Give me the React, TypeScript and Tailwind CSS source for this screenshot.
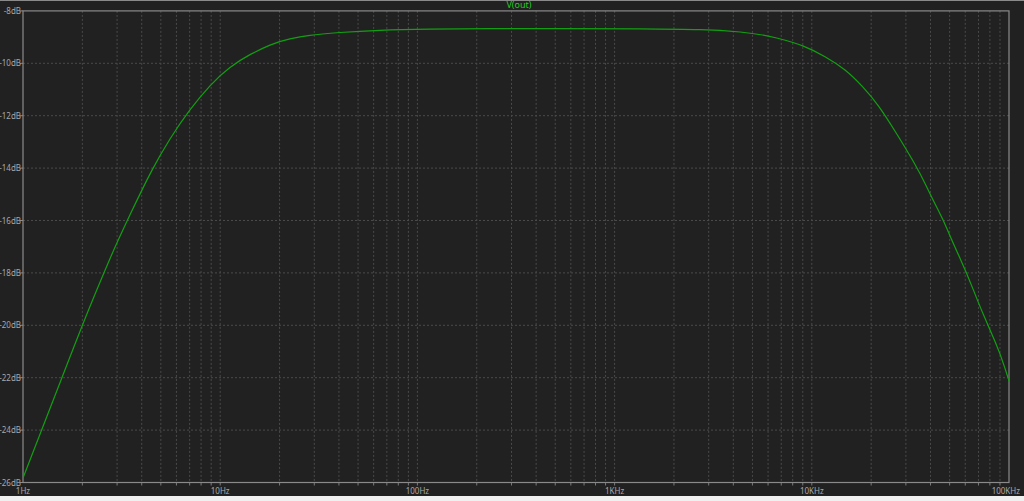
const X0 = 23;
const DEC = 197.2;
const yOf = (db: number) => 10.9 + (-8 - db) * 26.2;

const curve: [number, number][] = [
  [23, 478], [41.7, 430], [82.3, 325], [101.7, 278], [116.7, 243], [143.3, 186.7],
  [160, 155], [180, 123], [200, 96.7], [220, 75], [240, 60], [260, 49.3], [280, 41],
  [300, 36.7], [320, 34], [360, 31], [400, 29.6], [460, 28.8], [520, 28.6], [600, 28.7],
  [680, 29.2], [720, 30.2], [760, 33.8], [793.3, 42.2], [813.3, 50], [836.7, 63.3],
  [853.3, 76.7], [871.7, 96.7], [885, 115], [906.7, 150], [920, 173], [933, 200],
  [943.3, 220], [951.7, 240], [966.7, 273], [980, 306.7], [990, 330], [1000, 353], [1009, 380.7],
];

// smooth path through the sampled points (midpoint quadratic)
function smoothPath(pts: [number, number][]) {
  let d = `M${pts[0][0]},${pts[0][1]}`;
  for (let i = 1; i < pts.length - 1; i++) {
    const mx = (pts[i][0] + pts[i + 1][0]) / 2;
    const my = (pts[i][1] + pts[i + 1][1]) / 2;
    d += ` Q${pts[i][0]},${pts[i][1]} ${mx},${my}`;
  }
  const last = pts[pts.length - 1];
  return d + ` L${last[0]},${last[1]}`;
}

const decLabels = ['1Hz', '10Hz', '100Hz', '1KHz', '10KHz', '100KHz'];

export default function App() {
  const vlines: number[] = [];
  for (let d = 0; d < 5; d++) {
    for (let m = 2; m <= 9; m++) vlines.push(X0 + (d + Math.log10(m)) * DEC);
    if (d > 0) vlines.push(X0 + d * DEC);
  }
  const dbs = [-8, -10, -12, -14, -16, -18, -20, -22, -24, -26];
  return (
    <div className="w-[1024px] h-[501px] bg-[#212121] flex flex-col overflow-hidden font-['Liberation_Sans',Arial,sans-serif]">
      <div className="h-[1px] bg-[#8a8a8a]" />
      <svg width="1024" height="495" viewBox="0 1 1024 495" className="block">
        <text x="519" y="8" textAnchor="middle" fontSize="9" fill="#1fcf1f">V(out)</text>
        {vlines.map((x, i) => (
          <line key={i} x1={x} x2={x} y1={yOf(-8)} y2={yOf(-26)} stroke="#4a4a4a" strokeWidth="1" strokeDasharray="2 2" />
        ))}
        {dbs.slice(1, -1).map((d) => (
          <line key={d} x1={X0} x2={1009} y1={yOf(d)} y2={yOf(d)} stroke="#4a4a4a" strokeWidth="1" strokeDasharray="2 2" />
        ))}
        {vlines.map((x, i) => (
          <line key={'t' + i} x1={x} x2={x} y1={yOf(-26)} y2={yOf(-26) + 3} stroke="#7a7a7a" />
        ))}
        <rect x={X0} y={yOf(-8)} width={1009 - X0} height={yOf(-26) - yOf(-8)} fill="none" stroke="#8a8a8a" strokeWidth="1.2" />
        {dbs.map((d) => (
          <g key={'l' + d}>
            <line x1={X0 - 3} x2={X0} y1={yOf(d)} y2={yOf(d)} stroke="#8a8a8a" />
            <text x={X0 - 2} y={yOf(d) + 3} textAnchor="end" fontSize="8" fill="#a8a8a8">{d}dB</text>
          </g>
        ))}
        {decLabels.map((l, i) => (
          <text key={l} x={i === 5 ? 1020 : X0 + i * DEC} y="494" textAnchor={i === 5 ? 'end' : 'middle'} fontSize="8" fill="#a8a8a8">{l}</text>
        ))}
        <path d={smoothPath(curve)} fill="none" stroke="#12a012" strokeWidth="1.2" strokeLinejoin="round" />
      </svg>
      <div className="flex-1 bg-[#f0f0f0]" />
    </div>
  );
}
